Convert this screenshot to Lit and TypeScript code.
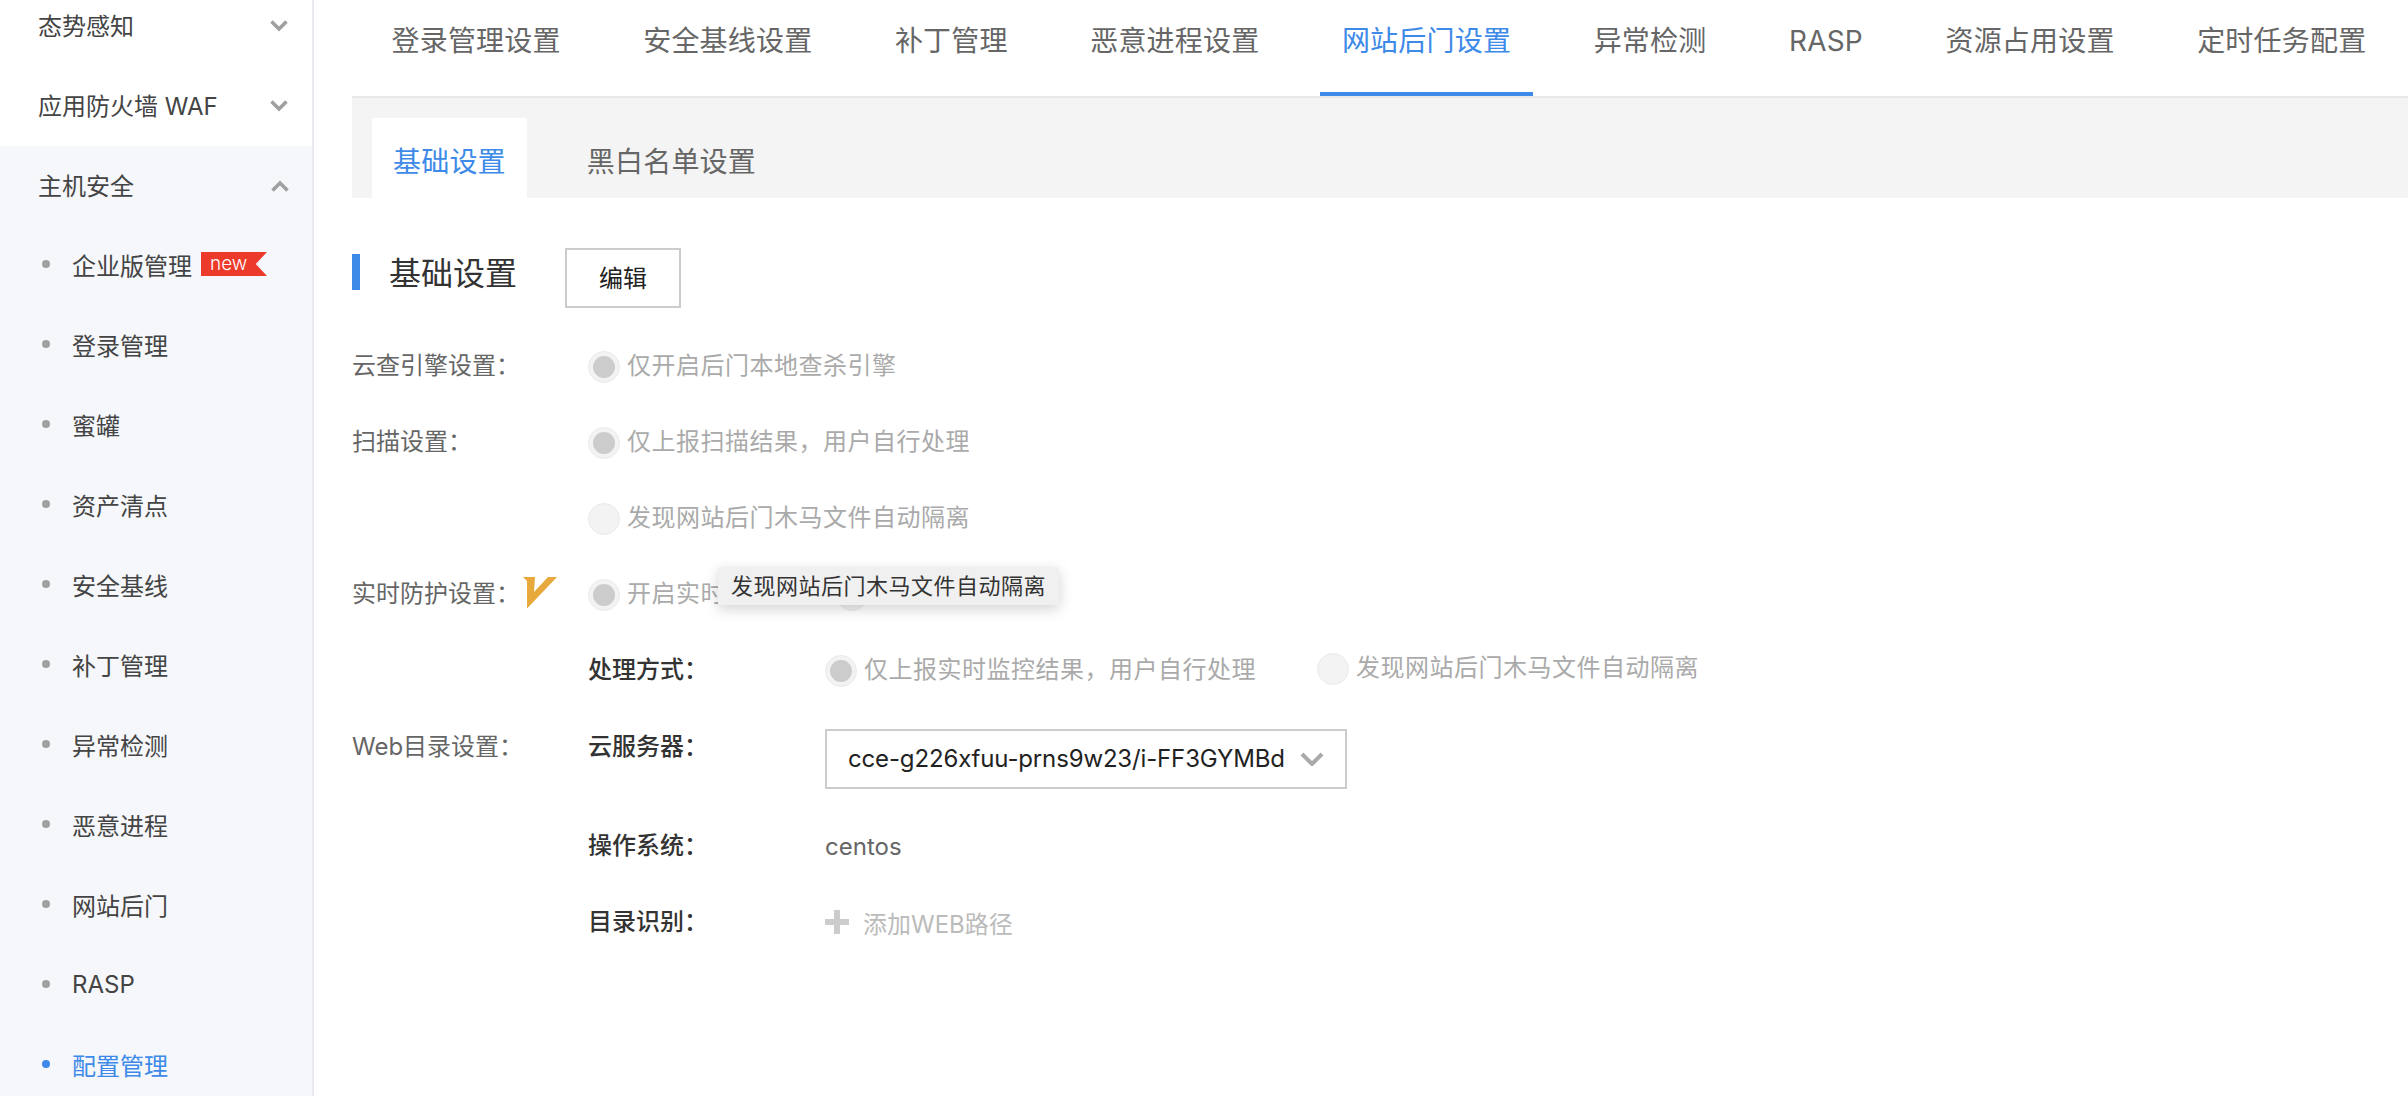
import { LitElement, html, css } from "lit";
import { customElement } from "lit/decorators.js";

const chevron = (up = false) => html`<svg class="chev" width="18" height="12" viewBox="0 0 18 12"><path d=${up ? "M1.5 10.5 L9 3 L16.5 10.5" : "M1.5 1.5 L9 9 L16.5 1.5"} fill="none" stroke="#a0a0a0" stroke-width="3.6"/></svg>`;

const radio = (label: string, on = false) => html`<span class="radio"><span class="dot ${on ? "on" : ""}"></span>${label ? html`<span class="rlabel">${label}</span>` : ""}</span>`;

@customElement("app-root")
export class AppRoot extends LitElement {
  static styles = css`
    :host { display: block; width: 2408px; height: 1096px; overflow: hidden; background: #fff; font-family: "Inter", "Noto Sans CJK SC", sans-serif; font-size: 24px; color: #666; }
    .page { display: flex; height: 1096px; }
    .side { width: 312px; flex: none; border-right: 2px solid #e8eaf0; overflow: hidden; }
    .menu { margin-top: -14px; display: flex; flex-direction: column; height: 1110px; }
    .top { height: 80px; flex: none; box-sizing: border-box; padding: 0 24px 4px 38px; display: flex; align-items: center; justify-content: space-between; color: #444; }
    .chev { margin-top: 4px; }
    .group { background: #f5f7fb; flex: 1; }
    .group .chev { margin-right: -1px; }
    .sub { height: 80px; box-sizing: border-box; padding: 0 0 4px 42px; display: flex; align-items: center; color: #444; }
    .bullet { width: 8px; height: 8px; border-radius: 50%; background: #a0a0a0; margin-right: 22px; margin-top: 0; }
    .sub.active { color: #3d8ae8; }
    .sub.active .bullet { background: #3d8ae8; }
    .badge { margin-left: 9px; width: 66px; height: 24px; box-sizing: border-box; padding-left: 9px; background: #ec3a2b; color: #fff; font-size: 19px; font-weight: 300; line-height: 23px; clip-path: polygon(0 0, 100% 0, 83% 50%, 100% 100%, 0 100%); }
    .main { flex: 1; min-width: 0; padding-left: 38px; }
    .tabs { display: flex; gap: 39.5px; height: 96px; padding-left: 18px; border-bottom: 2px solid #e8e8e8; font-size: 28px; letter-spacing: 0.2px; color: #666; }
    .tab { padding: 0 21.5px; height: 96px; line-height: 82px; box-sizing: border-box; white-space: nowrap; flex: none; }
    .tab.active { color: #3d8ae8; border-bottom: 4px solid #3d8ae8; }
    .subtabs { background: #f4f4f4; height: 100px; padding: 20px 0 0 20px; box-sizing: border-box; display: flex; gap: 39px; font-size: 28px; letter-spacing: 0.2px; color: #666; }
    .subtab { padding: 0 21px; height: 80px; line-height: 88px; }
    .subtab.active { background: #fff; color: #3d8ae8; }
    .head { display: flex; align-items: center; margin-top: 50px; height: 60px; }
    .head .bar { width: 8px; height: 36px; background: #3d8ae8; margin-top: -12px; }
    .head h2 { margin: -14px 0 0 29px; font-weight: 400; font-size: 32px; color: #333; width: 176px; }
    .btn { width: 116px; height: 60px; box-sizing: border-box; border: 2px solid #ccc; background: #fff; color: #222; font: inherit; font-size: 24px; padding: 0 0 4px; }
    .form { margin-top: 33px; display: flex; flex-direction: column; position: relative; }
    .row { display: flex; min-height: 48px; margin-bottom: 28px; align-items: center; }
    .row.before-sel { margin-bottom: 36px; }
    .label { width: 236px; flex: none; box-sizing: border-box; padding-bottom: 3px; display: flex; align-items: center; }
    .label svg { margin-left: 3px; margin-top: 3px; }
    .radio { display: inline-flex; align-items: center; color: #aaa; white-space: nowrap; letter-spacing: 0.5px; }
    .rlabel { padding-bottom: 3px; }
    .dot { width: 32px; height: 32px; border-radius: 50%; box-sizing: border-box; background: #f3f3f3; border: 1px solid #eaeaea; margin-right: 7px; margin-top: 4px; display: flex; align-items: center; justify-content: center; }
    .dot.on::after { content: ""; width: 22px; height: 22px; border-radius: 50%; background: #ccc; }
    .col2 { width: 237px; flex: none; color: #333; font-weight: 500; padding-bottom: 3px; }
    .sel { width: 522px; height: 60px; box-sizing: border-box; border: 2px solid #ccc; display: flex; align-items: center; justify-content: space-between; padding: 0 21px; color: #222; white-space: nowrap; letter-spacing: -0.15px; }
    .sel span { padding-bottom: 2px; }
    .row.top-align { align-items: flex-start; margin-bottom: 32px; }
    .row.top-align .label, .row.top-align .col2 { line-height: 36px; padding-bottom: 0; }
    .value { padding-top: 2px; }
    .plus { width: 24px; height: 24px; margin-right: 14px; }
    .add { display: flex; align-items: center; color: #bbb; padding-top: 2px; }
    .pair { display: flex; align-items: center; gap: 111px; }
    .second { margin-left: 61px; }
    .tip { position: absolute; left: 366px; top: 226px; width: 341px; height: 38px; box-sizing: border-box; background: #f0f0f0; border-radius: 2px; box-shadow: 0 4px 14px rgba(0,0,0,.18); color: #333; font-size: 22px; letter-spacing: 0.5px; line-height: 38px; padding-left: 13px; white-space: nowrap; }
  `;

  render() {
    const subs = ["登录管理", "蜜罐", "资产清点", "安全基线", "补丁管理", "异常检测", "恶意进程", "网站后门", "RASP"];
    const tabs = ["登录管理设置", "安全基线设置", "补丁管理", "恶意进程设置", "网站后门设置", "异常检测", "RASP", "资源占用设置", "定时任务配置"];
    return html`<div class="page">
      <aside class="side"><div class="menu">
        <div class="top"><span>态势感知</span>${chevron()}</div>
        <div class="top"><span>应用防火墙 WAF</span>${chevron()}</div>
        <div class="group">
          <div class="top"><span>主机安全</span>${chevron(true)}</div>
          <div class="sub"><i class="bullet"></i>企业版管理<span class="badge">new</span></div>
          ${subs.map((s) => html`<div class="sub"><i class="bullet"></i>${s}</div>`)}
          <div class="sub active"><i class="bullet"></i>配置管理</div>
        </div>
      </div></aside>
      <main class="main">
        <nav class="tabs">${tabs.map((t) => html`<div class="tab ${t === "网站后门设置" ? "active" : ""}">${t}</div>`)}</nav>
        <div class="subtabs"><div class="subtab active">基础设置</div><div class="subtab">黑白名单设置</div></div>
        <div class="head"><span class="bar"></span><h2>基础设置</h2><button class="btn">编辑</button></div>
        <div class="form">
          <div class="row"><div class="label">云查引擎设置：</div>${radio("仅开启后门本地查杀引擎", true)}</div>
          <div class="row"><div class="label">扫描设置：</div>${radio("仅上报扫描结果，用户自行处理", true)}</div>
          <div class="row"><div class="label"></div>${radio("发现网站后门木马文件自动隔离")}</div>
          <div class="row"><div class="label">实时防护设置：<svg width="35" height="32" viewBox="0 0 35 32"><path d="M0 0 L12 0 L11 15 L25 0 L34 0 L4 31.5 L4 4 Z" fill="#e8a93c"/></svg></div><div class="pair">${radio("开启实时", true)}${radio("")}</div></div>
          <div class="row before-sel"><div class="label"></div><div class="col2">处理方式：</div>${radio("仅上报实时监控结果，用户自行处理", true)}<span class="second">${radio("发现网站后门木马文件自动隔离")}</span></div>
          <div class="row top-align"><div class="label">Web目录设置：</div><div class="col2">云服务器：</div><div class="sel"><span>cce-g226xfuu-prns9w23/i-FF3GYMBd</span><svg width="24" height="14" viewBox="0 0 24 14"><path d="M2 2 L12 12 L22 2" fill="none" stroke="#aaa" stroke-width="4"/></svg></div></div>
          <div class="row"><div class="label"></div><div class="col2">操作系统：</div><span class="value">centos</span></div>
          <div class="row"><div class="label"></div><div class="col2">目录识别：</div><span class="add"><svg class="plus" viewBox="0 0 24 24"><path d="M9 0h6v9h9v6h-9v9H9v-9H0V9h9z" fill="#ccc"/></svg>添加WEB路径</span></div>
          <div class="tip">发现网站后门木马文件自动隔离</div>
        </div>
      </main>
    </div>`;
  }
}
